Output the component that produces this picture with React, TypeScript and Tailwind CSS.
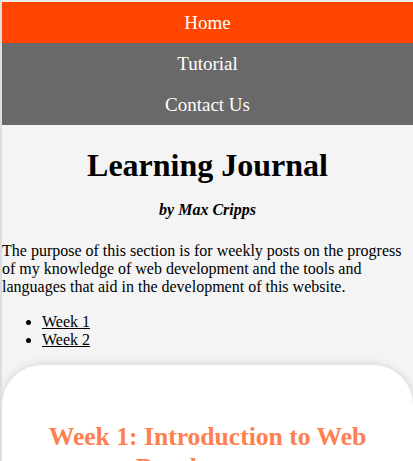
export default function App() {
  return (
    <div className="min-h-[461px] bg-[#f4f4f4] border-l-2 border-t-2 border-l-[#dedede] border-t-[#eaeaea] text-black overflow-hidden font-['Liberation_Serif','Times_New_Roman',serif]">
      <nav className="flex flex-col text-white text-[19px] leading-[21px]">
        <a className="block text-center py-[10px] bg-[#ff4500]">Home</a>
        <a className="block text-center py-[10px] bg-[#696969]">Tutorial</a>
        <a className="block text-center py-[10px] bg-[#696969]">Contact Us</a>
      </nav>

      <h1 className="mt-[22px] text-center text-[32px] leading-[37px] font-bold">Learning Journal</h1>
      <h4 className="mt-[17px] text-center text-[16px] leading-[18px] font-bold italic">by Max Cripps</h4>

      <p className="mt-[23px] text-[16px] leading-[18px] pr-2">
        The purpose of this section is for weekly posts on the progress of my knowledge of web development and the tools and languages that aid in the development of this website.
      </p>

      <ul className="mt-[17px] list-disc pl-10 text-[16px] leading-[18px]">
        <li><a className="underline">Week 1</a></li>
        <li><a className="underline">Week 2</a></li>
      </ul>

      <section className="mt-[16px] bg-white rounded-[40px] shadow-[0_0_10px_rgba(0,0,0,0.15)] pt-[56px] px-5 pb-10">
        <h2 className="text-center text-[25.6px] leading-[31px] font-bold text-[#ff7f50] font-['Liberation_Serif','Times_New_Roman',serif]">
          Week 1: Introduction to Web Development
        </h2>
      </section>
    </div>
  );
}
